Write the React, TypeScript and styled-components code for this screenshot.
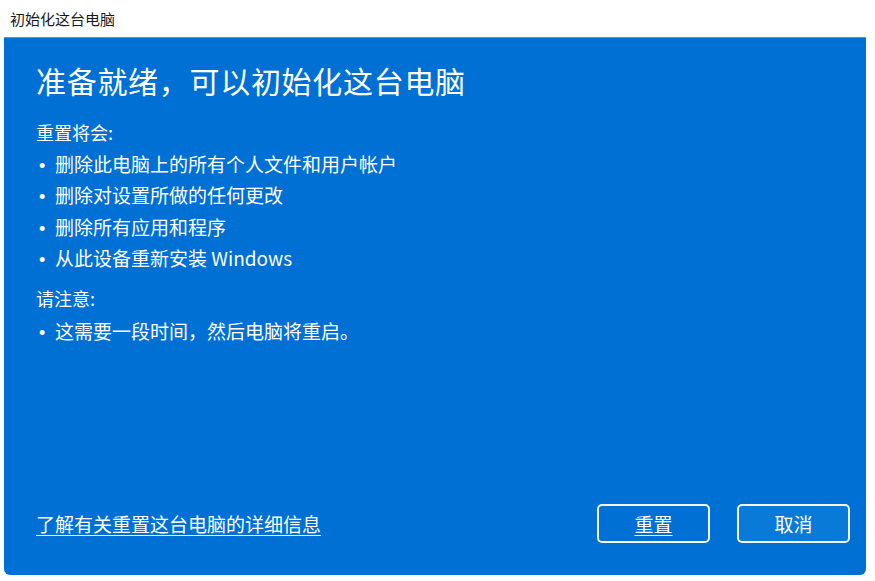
import React from "react";
import styled, { createGlobalStyle } from "styled-components";

const Global = createGlobalStyle`
  html, body { margin: 0; padding: 0; background: #ffffff; }
  body { font-family: "Noto Sans CJK SC", "Noto Sans", sans-serif; }
`;

const Window = styled.div`
  display: flex;
  flex-direction: column;
  height: 581px;
  width: 875px;
  background: #ffffff;
`;

const TitleBar = styled.div`
  height: 37px;
  display: flex;
  align-items: center;
  padding-left: 10px;
  font-size: 15px;
  color: #1a1a1a;
  box-sizing: border-box;
  padding-bottom: 1px;
`;

const Panel = styled.div`
  flex: 1;
  margin: 0 9px 6px 4px;
  background: #0070d4;
  border-top: 1px solid #4d95dc;
  border-radius: 0 0 6px 6px;
  display: flex;
  flex-direction: column;
  padding: 22px 16px 32px 32px;
  color: #ffffff;
  box-sizing: border-box;
`;

const Heading = styled.h1`
  margin: 0;
  font-weight: 400;
  font-size: 30px;
  line-height: 40px;
  letter-spacing: 0.7px;
`;

const Label = styled.div<{ $gap: number }>`
  margin-top: ${(p) => p.$gap}px;
  font-size: 18px;
  line-height: 31px;
`;

const List = styled.ul<{ $tight?: boolean }>`
  list-style: none;
  margin: ${(p) => (p.$tight ? "1px" : "0")} 0 0;
  padding: 0;
`;

const Item = styled.li`
  font-size: 19px;
  line-height: 31px;
  height: 31.3px;
  white-space: nowrap;
  &::before {
    content: "•";
    display: inline-block;
    font-family: "Liberation Sans", sans-serif;
    line-height: 1;
    width: 19px;
    padding-left: 3px;
    box-sizing: border-box;
    font-size: 18px;
  }
`;

const Footer = styled.div`
  margin-top: auto;
  display: flex;
  align-items: center;
  justify-content: space-between;
`;

const Link = styled.a`
  color: #ffffff;
  font-size: 19px;
  text-decoration: underline;
  text-underline-offset: 3px;
  cursor: pointer;
`;

const Buttons = styled.div`
  display: flex;
  gap: 27px;
`;

const Button = styled.button<{ $alt?: boolean }>`
  width: 113px;
  height: 39px;
  border: 2px solid #f2f6fb;
  border-radius: 5px;
  background: ${(p) => (p.$alt ? "#0a7ad9" : "#0070d4")};
  color: #ffffff;
  font-family: "Noto Sans CJK SC", "Noto Sans", sans-serif;
  font-size: 19px;
  cursor: pointer;
  padding: 0;
`;

const Under = styled.span`
  text-decoration: underline;
  text-underline-offset: 3px;
`;

export default function App() {
  return (
    <>
      <Global />
      <Window>
        <TitleBar>初始化这台电脑</TitleBar>
        <Panel>
          <Heading>准备就绪，可以初始化这台电脑</Heading>
          <Label $gap={17}>重置将会:</Label>
          <List>
            <Item>删除此电脑上的所有个人文件和用户帐户</Item>
            <Item>删除对设置所做的任何更改</Item>
            <Item>删除所有应用和程序</Item>
            <Item>从此设备重新安装 Windows</Item>
          </List>
          <Label $gap={10}>请注意:</Label>
          <List $tight>
            <Item>这需要一段时间，然后电脑将重启。</Item>
          </List>
          <Footer>
            <Link>了解有关重置这台电脑的详细信息</Link>
            <Buttons>
              <Button>
                <Under>重置</Under>
              </Button>
              <Button $alt>取消</Button>
            </Buttons>
          </Footer>
        </Panel>
      </Window>
    </>
  );
}
